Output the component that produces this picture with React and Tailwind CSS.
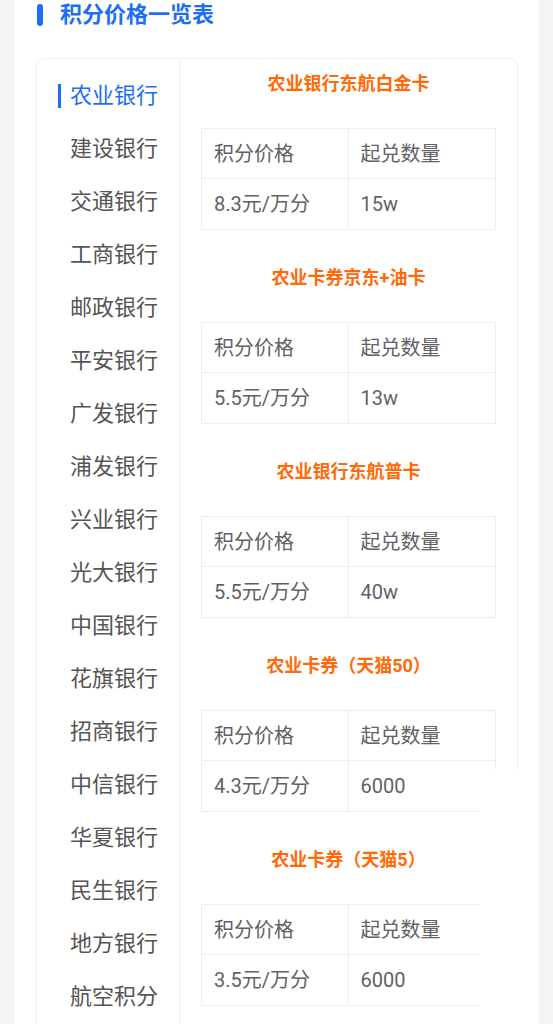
import React from 'react';

// ─── Data ─────────────────────────────────────────────────────────────────────
const BANKS = [
  '农业银行', '建设银行', '交通银行', '工商银行', '邮政银行', '平安银行',
  '广发银行', '浦发银行', '兴业银行', '光大银行', '中国银行', '花旗银行',
  '招商银行', '中信银行', '华夏银行', '民生银行', '地方银行', '航空积分',
];

const CARDS = [
  { name: '农业银行东航白金卡', price: '8.3元/万分', min: '15w' },
  { name: '农业卡券京东+油卡', price: '5.5元/万分', min: '13w' },
  { name: '农业银行东航普卡', price: '5.5元/万分', min: '40w' },
  { name: '农业卡券（天猫50）', price: '4.3元/万分', min: '6000' },
  { name: '农业卡券（天猫5）', price: '3.5元/万分', min: '6000' },
];

const FONT = { fontFamily: 'Roboto, "Noto Sans CJK SC", "Noto Sans", sans-serif' };

// ─── Price table ──────────────────────────────────────────────────────────────
const PriceTable = ({ price, min }) => (
  <div className="w-[295px] mx-auto mt-[22px] border border-[#ebeef5] text-[20px] text-[#606266]">
    <div className="grid grid-cols-2 h-[50px] border-b border-[#ebeef5]">
      <div className="flex items-center px-[12px] border-r border-[#ebeef5]">积分价格</div>
      <div className="flex items-center px-[12px]">起兑数量</div>
    </div>
    <div className="grid grid-cols-2 h-[50px]">
      <div className="flex items-center px-[12px] border-r border-[#ebeef5]">{price}</div>
      <div className="flex items-center px-[12px]">{min}</div>
    </div>
  </div>
);

export default function App() {
  return (
    <div className="relative w-[553px] h-[1024px] overflow-hidden bg-[#f3f4f6]" style={FONT}>
      <div className="mx-[14px] h-full bg-white">
        {/* Header */}
        <div className="flex items-center h-[30px] pl-[23px]">
          <span className="w-[6px] h-[22px] rounded-full bg-[#1d6ff2]" />
          <span className="ml-[17px] text-[22px] font-bold text-[#1d6ff2] leading-none">积分价格一览表</span>
        </div>

        {/* Card */}
        <div className="mt-[28px] ml-[22px] w-[482px] h-[1100px] rounded-[8px] border border-[#eeeeee] flex">
          {/* Sidebar */}
          <div className="w-[143px] shrink-0 border-r border-[#eeeeee] pt-[10px]">
            {BANKS.map((b, i) => (
              <div key={b} className="h-[53px] flex items-center pl-[21px]">
                <span className={i === 0 ? 'w-[3px] h-[24px] bg-[#1d6ff2]' : 'w-[3px] h-[24px]'} />
                <span className={i === 0 ? 'ml-[9px] text-[22px] text-[#1d6ff2]' : 'ml-[9px] text-[22px] text-[#555555]'}>
                  {b}
                </span>
              </div>
            ))}
          </div>

          {/* Content */}
          <div className="flex-1 pt-[1px]">
            {CARDS.map((c, i) => (
              <div key={c.name} className={i === 0 ? '' : 'mt-[24px]'}>
                <div className="h-[46px] flex items-center justify-center text-[18px] font-bold text-[#ff6a07]">
                  {c.name}
                </div>
                <PriceTable price={c.price} min={c.min} />
              </div>
            ))}
          </div>
        </div>
      </div>

      {/* white patch over lower right */}
      <div className="absolute left-[480px] top-[769px] w-[59px] h-[255px] bg-white" />
    </div>
  );
}
